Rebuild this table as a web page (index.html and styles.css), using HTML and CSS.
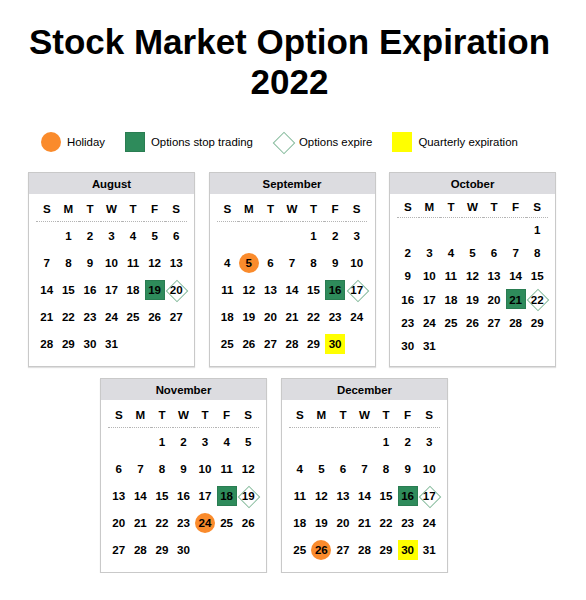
FILE: index.html
```html
<!DOCTYPE html>
<html lang="en">
<head>
<meta charset="utf-8">
<title>Stock Market Option Expiration 2022</title>
<link rel="stylesheet" href="styles.css">
</head>
<body>
<h1 class="title">Stock Market Option Expiration<br>2022</h1>

<div class="legend">
  <div class="leg-item"><span class="mk circle"></span><span>Holiday</span></div>
  <div class="leg-item"><span class="mk green"></span><span>Options stop trading</span></div>
  <div class="leg-item"><span class="mk diamond"></span><span>Options expire</span></div>
  <div class="leg-item"><span class="mk yellow"></span><span>Quarterly expiration</span></div>
</div>

<div class="cal-row first">
  <div class="cal">
    <div class="cal-head">August</div>
    <div class="cal-body">
      <div class="wd">S</div><div class="wd">M</div><div class="wd">T</div><div class="wd">W</div><div class="wd">T</div><div class="wd">F</div><div class="wd">S</div>
      <div class="d"></div><div class="d">1</div><div class="d">2</div><div class="d">3</div><div class="d">4</div><div class="d">5</div><div class="d">6</div>
      <div class="d">7</div><div class="d">8</div><div class="d">9</div><div class="d">10</div><div class="d">11</div><div class="d">12</div><div class="d">13</div>
      <div class="d">14</div><div class="d">15</div><div class="d">16</div><div class="d">17</div><div class="d">18</div><div class="d"><span class="mk green">19</span></div><div class="d"><span class="mk diamond">20</span></div>
      <div class="d">21</div><div class="d">22</div><div class="d">23</div><div class="d">24</div><div class="d">25</div><div class="d">26</div><div class="d">27</div>
      <div class="d">28</div><div class="d">29</div><div class="d">30</div><div class="d">31</div><div class="d"></div><div class="d"></div><div class="d"></div>
    </div>
  </div>
  <div class="cal">
    <div class="cal-head">September</div>
    <div class="cal-body">
      <div class="wd">S</div><div class="wd">M</div><div class="wd">T</div><div class="wd">W</div><div class="wd">T</div><div class="wd">F</div><div class="wd">S</div>
      <div class="d"></div><div class="d"></div><div class="d"></div><div class="d"></div><div class="d">1</div><div class="d">2</div><div class="d">3</div>
      <div class="d">4</div><div class="d"><span class="mk circle">5</span></div><div class="d">6</div><div class="d">7</div><div class="d">8</div><div class="d">9</div><div class="d">10</div>
      <div class="d">11</div><div class="d">12</div><div class="d">13</div><div class="d">14</div><div class="d">15</div><div class="d"><span class="mk green">16</span></div><div class="d"><span class="mk diamond">17</span></div>
      <div class="d">18</div><div class="d">19</div><div class="d">20</div><div class="d">21</div><div class="d">22</div><div class="d">23</div><div class="d">24</div>
      <div class="d">25</div><div class="d">26</div><div class="d">27</div><div class="d">28</div><div class="d">29</div><div class="d"><span class="mk yellow">30</span></div><div class="d"></div>
    </div>
  </div>
  <div class="cal">
    <div class="cal-head">October</div>
    <div class="cal-body">
      <div class="wd">S</div><div class="wd">M</div><div class="wd">T</div><div class="wd">W</div><div class="wd">T</div><div class="wd">F</div><div class="wd">S</div>
      <div class="d"></div><div class="d"></div><div class="d"></div><div class="d"></div><div class="d"></div><div class="d"></div><div class="d">1</div>
      <div class="d">2</div><div class="d">3</div><div class="d">4</div><div class="d">5</div><div class="d">6</div><div class="d">7</div><div class="d">8</div>
      <div class="d">9</div><div class="d">10</div><div class="d">11</div><div class="d">12</div><div class="d">13</div><div class="d">14</div><div class="d">15</div>
      <div class="d">16</div><div class="d">17</div><div class="d">18</div><div class="d">19</div><div class="d">20</div><div class="d"><span class="mk green">21</span></div><div class="d"><span class="mk diamond">22</span></div>
      <div class="d">23</div><div class="d">24</div><div class="d">25</div><div class="d">26</div><div class="d">27</div><div class="d">28</div><div class="d">29</div>
      <div class="d">30</div><div class="d">31</div><div class="d"></div><div class="d"></div><div class="d"></div><div class="d"></div><div class="d"></div>
    </div>
  </div>
</div>

<div class="cal-row second">
  <div class="cal">
    <div class="cal-head">November</div>
    <div class="cal-body">
      <div class="wd">S</div><div class="wd">M</div><div class="wd">T</div><div class="wd">W</div><div class="wd">T</div><div class="wd">F</div><div class="wd">S</div>
      <div class="d"></div><div class="d"></div><div class="d">1</div><div class="d">2</div><div class="d">3</div><div class="d">4</div><div class="d">5</div>
      <div class="d">6</div><div class="d">7</div><div class="d">8</div><div class="d">9</div><div class="d">10</div><div class="d">11</div><div class="d">12</div>
      <div class="d">13</div><div class="d">14</div><div class="d">15</div><div class="d">16</div><div class="d">17</div><div class="d"><span class="mk green">18</span></div><div class="d"><span class="mk diamond">19</span></div>
      <div class="d">20</div><div class="d">21</div><div class="d">22</div><div class="d">23</div><div class="d"><span class="mk circle">24</span></div><div class="d">25</div><div class="d">26</div>
      <div class="d">27</div><div class="d">28</div><div class="d">29</div><div class="d">30</div><div class="d"></div><div class="d"></div><div class="d"></div>
    </div>
  </div>
  <div class="cal">
    <div class="cal-head">December</div>
    <div class="cal-body">
      <div class="wd">S</div><div class="wd">M</div><div class="wd">T</div><div class="wd">W</div><div class="wd">T</div><div class="wd">F</div><div class="wd">S</div>
      <div class="d"></div><div class="d"></div><div class="d"></div><div class="d"></div><div class="d">1</div><div class="d">2</div><div class="d">3</div>
      <div class="d">4</div><div class="d">5</div><div class="d">6</div><div class="d">7</div><div class="d">8</div><div class="d">9</div><div class="d">10</div>
      <div class="d">11</div><div class="d">12</div><div class="d">13</div><div class="d">14</div><div class="d">15</div><div class="d"><span class="mk green">16</span></div><div class="d"><span class="mk diamond">17</span></div>
      <div class="d">18</div><div class="d">19</div><div class="d">20</div><div class="d">21</div><div class="d">22</div><div class="d">23</div><div class="d">24</div>
      <div class="d">25</div><div class="d"><span class="mk circle">26</span></div><div class="d">27</div><div class="d">28</div><div class="d">29</div><div class="d"><span class="mk yellow">30</span></div><div class="d">31</div>
    </div>
  </div>
</div>
</body>
</html>
```

FILE: styles.css
```css
* { box-sizing: border-box; }

body {
  margin: 0;
  background: #ffffff;
  color: #000000;
  font-family: "Liberation Sans", Arial, sans-serif;
}

.title {
  margin: 22px 0 0;
  padding-right: 7px;
  font-size: 35px;
  line-height: 40px;
  font-weight: bold;
  text-align: center;
}

.legend {
  display: flex;
  align-items: center;
  gap: 20px;
  margin-top: 30px;
  padding-left: 41px;
  height: 20px;
  font-size: 11.4px;
}

.leg-item {
  display: flex;
  align-items: center;
  gap: 6px;
}

.mk {
  position: relative;
  width: 20px;
  height: 20px;
  display: flex;
  align-items: center;
  justify-content: center;
  flex: none;
}

.mk.circle {
  background: #fa8b2c;
  border-radius: 50%;
}

.mk.green {
  background: #2e8b5b;
  border: 1px solid #2a7d52;
}

.mk.yellow {
  background: #ffff00;
}

.mk.diamond::before {
  content: "";
  position: absolute;
  left: 3px;
  top: 3px;
  width: 14px;
  height: 14px;
  border: 1.5px solid #86bb9d;
  transform: rotate(45deg);
}

.cal-row {
  display: flex;
  gap: 13.5px;
}

.cal-row.first {
  margin-top: 20px;
  padding-left: 28px;
}

.cal-row.second {
  margin-top: 11px;
  padding-left: 100px;
  gap: 14px;
}

.cal {
  width: 167px;
  height: 195px;
  border: 1px solid #c9c9c9;
  box-shadow: 0 1px 1px rgba(0, 0, 0, 0.12);
  display: flex;
  flex-direction: column;
  background: #ffffff;
}

.cal-head {
  height: 21px;
  background: #dcdce0;
  font-size: 11.4px;
  font-weight: bold;
  display: flex;
  align-items: center;
  justify-content: center;
}

.cal-body {
  flex: 1;
  display: grid;
  grid-template-columns: repeat(7, 1fr);
  grid-auto-rows: 1fr;
  padding: 1px 7px 9px;
  font-size: 11.6px;
  font-weight: bold;
}

.wd,
.d {
  display: flex;
  align-items: center;
  justify-content: center;
}

.wd {
  border-bottom: 1px dotted #b4b4b4;
}
```
